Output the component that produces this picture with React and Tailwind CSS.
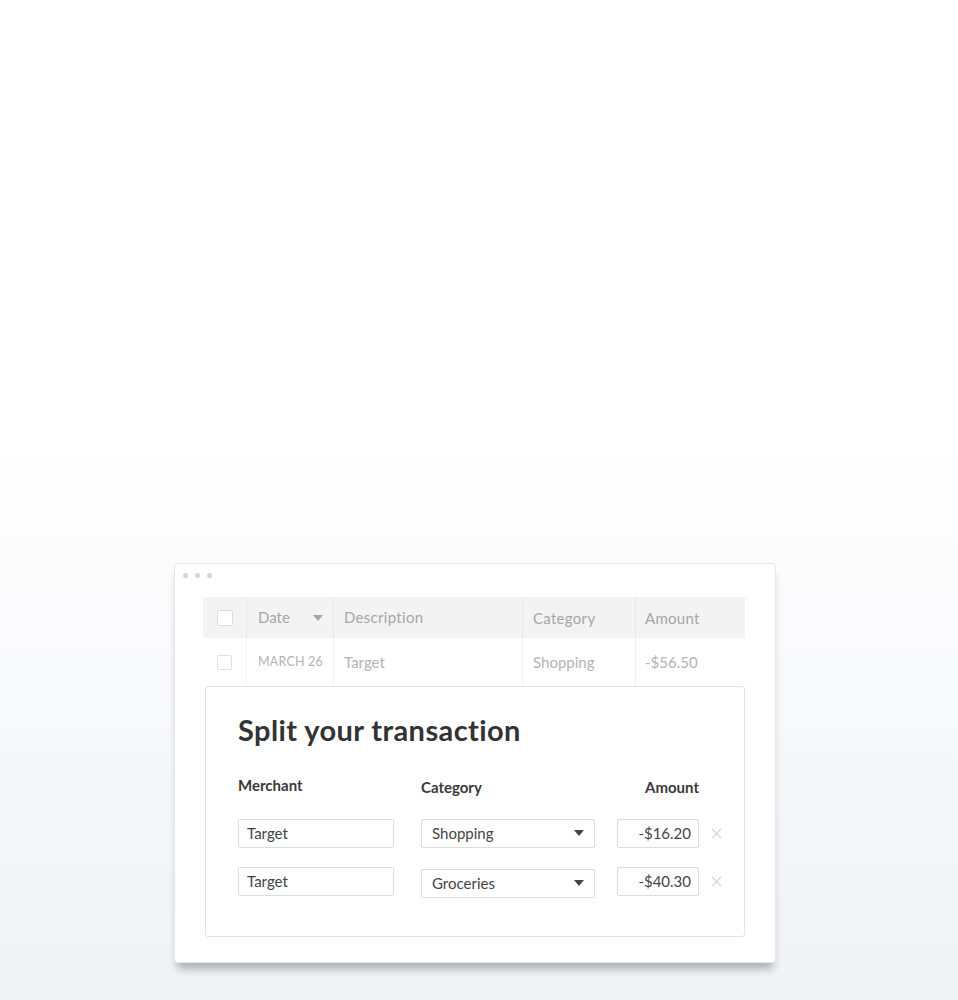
import React from 'react';

const font = { fontFamily: 'Lato, "Noto Sans", "Liberation Sans", sans-serif' };

function CaretDown({ className }) {
  return (
    <svg viewBox="0 0 10 6" className={className} fill="currentColor">
      <path d="M0 0h10L5 6z" />
    </svg>
  );
}

function XIcon() {
  return (
    <svg viewBox="0 0 12 12" className="h-[11px] w-[11px] text-[#cfcfcf]" stroke="currentColor" strokeWidth="1.2">
      <path d="M1 1l10 10M11 1L1 11" />
    </svg>
  );
}

const splits = [
  { merchant: 'Target', category: 'Shopping', amount: '-$16.20', mt: 'mt-0', selMt: 'mt-0' },
  { merchant: 'Target', category: 'Groceries', amount: '-$40.30', mt: 'mt-[19px]', selMt: 'mt-[2px]' },
];

export default function App() {
  return (
    <div
      className="min-h-[1000px] w-full bg-[linear-gradient(to_bottom,#ffffff_0%,#ffffff_44%,#f1f2f6_100%)] pt-[563px]"
      style={font}
    >
      <div className="ml-[174px] h-[400px] w-[602px] rounded-[4px] border border-[#e6e6e6] bg-white shadow-[0_9px_8px_-3px_rgba(0,0,0,0.28)]">
        {/* window dots */}
        <div className="flex gap-[7px] pl-[8px] pt-[9px]">
          <span className="h-[5px] w-[5px] rounded-full bg-[#d6d6d6]" />
          <span className="h-[5px] w-[5px] rounded-full bg-[#d6d6d6]" />
          <span className="h-[5px] w-[5px] rounded-full bg-[#d6d6d6]" />
        </div>

        <div className="ml-[28px] mt-[19px] w-[542px]">
          {/* table header */}
          <div className="flex h-[41px] items-center bg-[#f3f3f3] text-[15px] text-[#a6a6a6]">
            <div className="flex h-full w-[44px] items-center justify-center border-r border-[#e8e8e8]">
              <span className="h-[16px] w-[16px] rounded-[2px] border border-[#dcdcdc] bg-white" />
            </div>
            <div className="flex h-full w-[87px] items-center justify-between border-r border-[#e8e8e8] pl-[11px] pr-[10px]">
              <span>Date</span>
              <CaretDown className="h-[6px] w-[10px] text-[#a6a6a6]" />
            </div>
            <div className="flex h-full w-[189px] items-center border-r border-[#e8e8e8] pl-[10px] tracking-[0.3px]">Description</div>
            <div className="flex h-full w-[113px] items-center border-r border-[#e8e8e8] pl-[10px] pt-[2px] tracking-[0.3px]">Category</div>
            <div className="flex h-full flex-1 items-center pl-[9px] pt-[2px] tracking-[0.3px]">Amount</div>
          </div>

          {/* table row */}
          <div className="flex h-[48px] items-center text-[15px] text-[#b3b3b3]">
            <div className="flex h-full w-[44px] items-center justify-center border-r border-[#f0f0f0]">
              <span className="h-[15px] w-[15px] rounded-[2px] border border-[#e2e2e2]" />
            </div>
            <div className="flex h-full w-[87px] items-center border-r border-[#f0f0f0] pl-[11px] text-[12.5px] tracking-[0.2px]">
              MARCH 26
            </div>
            <div className="flex h-full w-[189px] items-center border-r border-[#f0f0f0] pl-[10px]">Target</div>
            <div className="flex h-full w-[113px] items-center border-r border-[#f0f0f0] pl-[10px]">Shopping</div>
            <div className="flex h-full flex-1 items-center pl-[9px]">-$56.50</div>
          </div>
        </div>

        {/* split panel */}
        <div className="ml-[30px] h-[251px] w-[540px] rounded-[3px] border border-[#e2e2e2] bg-white pl-[32px] pt-[26px] text-[#333]">
          <h2 className="text-[29px] font-bold leading-[34px] tracking-[0.4px] text-[#333]">Split your transaction</h2>

          <div className="mt-[27px] flex text-[15px] font-bold text-[#3a3a3a]">
            <div className="w-[183px]">Merchant</div>
            <div className="mt-[2px] w-[196px]">Category</div>
            <div className="mt-[2px] w-[82px] text-right">Amount</div>
          </div>

          <div className="mt-[20px]">
            {splits.map((s, i) => (
              <div key={i} className={`flex items-start ${s.mt}`}>
                <div className="flex h-[29px] w-[156px] items-center rounded-[2px] border border-[#dcdcdc] pl-[8px] text-[15px] text-[#444]">
                  {s.merchant}
                </div>
                <div className={`ml-[27px] flex h-[29px] w-[174px] items-center justify-between rounded-[2px] border border-[#dcdcdc] pl-[10px] pr-[10px] text-[15px] text-[#444] ${s.selMt}`}>
                  <span>{s.category}</span>
                  <CaretDown className="h-[6px] w-[10px] text-[#444]" />
                </div>
                <div className="ml-[22px] flex h-[29px] w-[82px] items-center justify-end rounded-[2px] border border-[#dcdcdc] pr-[7px] text-[15px] text-[#444]">
                  {s.amount}
                </div>
                <div className="ml-[12px] flex h-[29px] items-center">
                  <XIcon />
                </div>
              </div>
            ))}
          </div>
        </div>
      </div>
    </div>
  );
}
